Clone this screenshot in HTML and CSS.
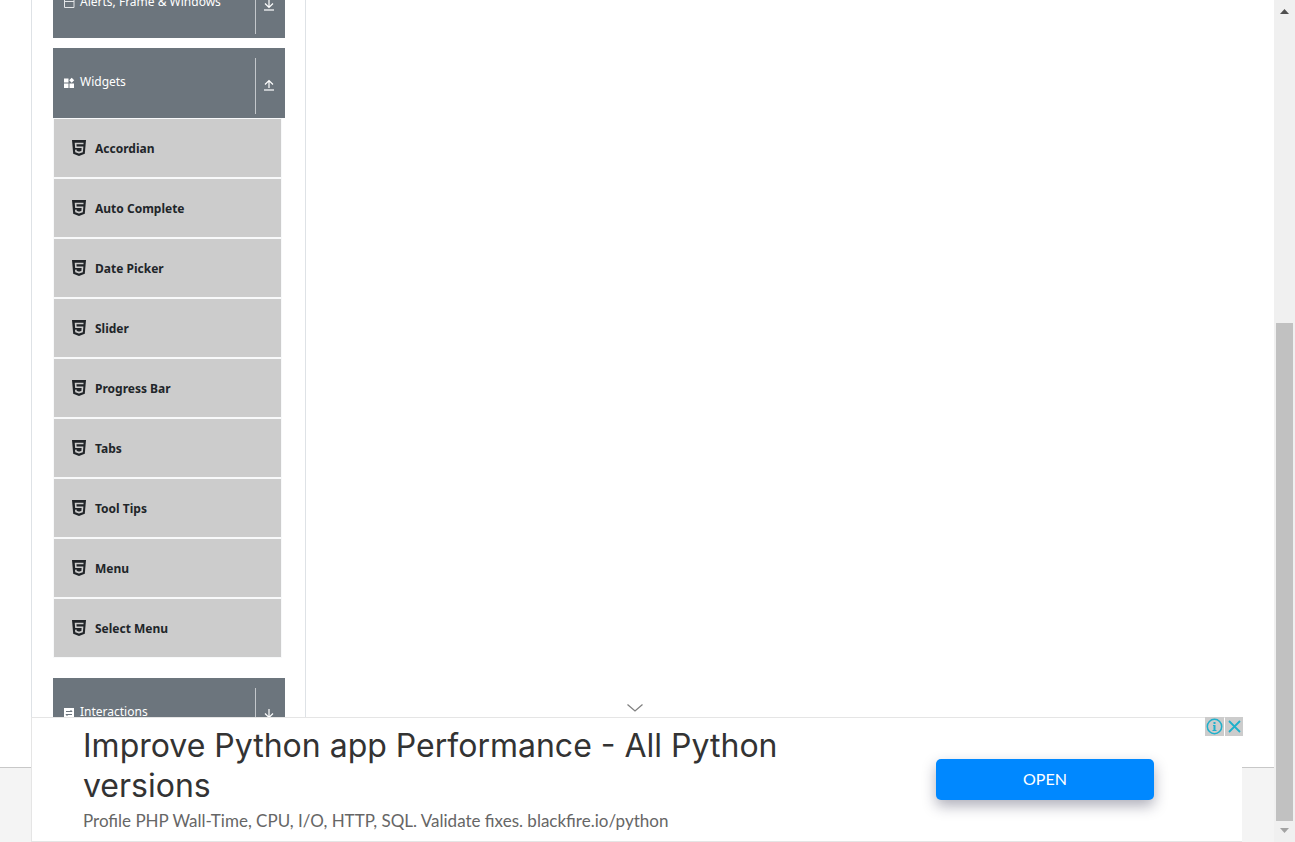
FILE: index.html
```html
<!DOCTYPE html>
<html lang="en">
<head>
<meta charset="utf-8">
<title>Widgets</title>
<link rel="stylesheet" href="styles.css">
</head>
<body>
<svg class="defs" aria-hidden="true">
  <symbol id="html5" viewBox="0 0 14 16">
    <path fill="#212529" d="M0 0h14l-1.200 13.800L7 16l-5.800-2.200z"/>
    <path fill="none" stroke="#ccc" stroke-width="1.600" d="M11.500 3.500H3.600l.3 3.700h6.600l-.4 4.400L7 12.600l-3-1-.2-1.900"/>
  </symbol>
  <symbol id="down" viewBox="0 0 10 12">
    <path fill="none" stroke="#fff" stroke-width="1.200" d="M5 0v8M1 4.500l4 4 4-4"/>
    <path fill="none" stroke="#c3c7cb" stroke-width="2" d="M0 11h10"/>
  </symbol>
  <symbol id="up" viewBox="0 0 10 12">
    <path fill="none" stroke="#fff" stroke-width="1.200" d="M5 9V1.500M1 5.500l4-4 4 4"/>
    <path fill="none" stroke="#c3c7cb" stroke-width="2" d="M0 11h10"/>
  </symbol>
</svg>
<div class="window">
  <div class="page">
    <main class="main">
      <nav class="sidebar">
        <button class="group" type="button">
          <svg class="group-icon" viewBox="0 0 12 12"><path fill="none" stroke="#e4e6e8" d="M1.500 1.500h9.500v9H1.500zM1 4.500h10"/></svg>
          <span class="group-name">Alerts, Frame &amp; Windows</span>
          <span class="toggle"><svg class="arrow"><use href="#down"/></svg></span>
        </button>
        <div class="open-group">
          <button class="group" type="button" aria-expanded="true">
            <svg class="group-icon" viewBox="0 0 12 12"><path fill="#fff" d="M1 1.500h4.500v4H1zM1 6.500h4.500V11H1zM6.500 6.500H11V11H6.500zM8.700.8l2.500 2.500-2.500 2.500-2.500-2.500z"/></svg>
            <span class="group-name">Widgets</span>
            <span class="toggle"><svg class="arrow"><use href="#up"/></svg></span>
          </button>
          <ul class="items">
            <li><a class="item" href="#"><svg class="item-icon"><use href="#html5"/></svg>Accordian</a></li>
            <li><a class="item" href="#"><svg class="item-icon"><use href="#html5"/></svg>Auto Complete</a></li>
            <li><a class="item" href="#"><svg class="item-icon"><use href="#html5"/></svg>Date Picker</a></li>
            <li><a class="item" href="#"><svg class="item-icon"><use href="#html5"/></svg>Slider</a></li>
            <li><a class="item" href="#"><svg class="item-icon"><use href="#html5"/></svg>Progress Bar</a></li>
            <li><a class="item" href="#"><svg class="item-icon"><use href="#html5"/></svg>Tabs</a></li>
            <li><a class="item" href="#"><svg class="item-icon"><use href="#html5"/></svg>Tool Tips</a></li>
            <li><a class="item" href="#"><svg class="item-icon"><use href="#html5"/></svg>Menu</a></li>
            <li><a class="item" href="#"><svg class="item-icon"><use href="#html5"/></svg>Select Menu</a></li>
          </ul>
        </div>
        <button class="group" type="button">
          <svg class="group-icon" viewBox="0 0 12 12"><path fill="#fff" d="M1 1h10v10H1z"/><path fill="none" stroke="#6c757d" d="M3 4.500h6L7.500 3M9 7.500H3L4.500 9"/></svg>
          <span class="group-name">Interactions</span>
          <span class="toggle"><svg class="arrow"><use href="#down"/></svg></span>
        </button>
      </nav>
    </main>
    <footer class="footer"></footer>
    <aside class="ad">
      <button class="collapse" type="button" aria-label="Collapse"><svg width="16" height="8" viewBox="0 0 16 8"><path fill="none" stroke="#808080" stroke-width="1.300" d="M.5.500 8 7 15.500.500"/></svg></button>
      <div class="ad-copy">
        <h2 class="ad-title">Improve Python app Performance - All Python versions</h2>
        <p class="ad-text">Profile PHP Wall-Time, CPU, I/O, HTTP, SQL. Validate fixes. blackfire.io/python</p>
      </div>
      <a class="open" href="#">OPEN</a>
      <div class="ad-tools">
        <button class="tool" type="button" aria-label="Ad information"><svg width="19" height="19" viewBox="0 0 19 19"><g fill="none" stroke="#1fb0cb"><circle cx="9.500" cy="9.500" r="7.200" stroke-width="1.500"/><path stroke-width="2" d="M9.500 8v6M9.500 5v2"/><path d="M8 8.500h1.500M7.500 13.500h4"/></g></svg></button>
        <button class="tool" type="button" aria-label="Close ad"><svg width="18" height="19" viewBox="0 0 18 19"><path fill="none" stroke="#1fb0cb" stroke-width="1.800" d="m4 4 11 11M15 4 4 15"/></svg></button>
      </div>
    </aside>
  </div>
  <div class="scrollbar">
    <svg width="9" height="5" viewBox="0 0 9 5"><path fill="#505050" d="M0 5h9L4.500 0z"/></svg>
    <div class="track"><div class="thumb"></div></div>
    <svg width="9" height="5" viewBox="0 0 9 5"><path fill="#a3a3a3" d="M0 0h9L4.500 5z"/></svg>
  </div>
</div>
</body>
</html>
```
FILE: styles.css
```css
* { box-sizing: border-box; }
body { margin: 0; font-family: "Noto Sans", sans-serif; background: #fff; }
button { border: 0; padding: 0; font: inherit; background: none; }
svg { display: block; flex: none; }
.defs { display: none; }
.window { display: flex; height: 100vh; overflow: hidden; }
.page { position: relative; display: flex; flex: 1; flex-direction: column; min-width: 0; overflow: hidden; }
.main { flex: 1; min-height: 0; padding-left: 31px; }
.footer { flex: none; height: 75px; border-top: 1px solid #c8c8c8; background: #f4f4f4; }

/* The navigation is scrolled part of the way down. */
.sidebar { width: 275px; margin-top: -32px; padding: 0 20px 0 21px; border: solid #dee2e6; border-width: 0 1px; }
.group { display: flex; width: 100%; height: 70px; padding: 10px 0 4px 10px; background: #6c757d; color: #fff; font-size: 12px; text-align: left; }
.group-icon { width: 12px; height: 12px; margin-top: 19px; }
.group-name { flex: 1; margin: 14px 0 0 5px; line-height: 20px; white-space: nowrap; }
.toggle { width: 30px; height: 56px; padding: 21px 0 0 8px; border-left: 1px solid #c3c7cb; }
.arrow { width: 10px; height: 12px; }
.open-group { margin: 10px 0 20px; }
.items { margin: 0 3px 0 0; padding: 0; list-style: none; }
.item { display: flex; align-items: center; gap: 9px; height: 60px; padding-left: 18px; border: 1px solid #f8f9fa; background: #ccc; color: #212529; font-size: 12px; font-weight: 700; text-decoration: none; }
.item-icon { width: 14px; height: 16px; }

.ad { position: absolute; right: 32px; bottom: 0; left: 31px; display: flex; height: 125px; border: 1px solid #e5e5e5; border-right: 0; background: #fff; font-family: Lato, sans-serif; }
.ad-copy { flex: 1; max-width: 760px; padding: 8px 0 0 51px; }
.ad-title { margin: 0; color: #333; font-family: Inter, sans-serif; font-size: 32px; font-weight: 400; line-height: 40px; }
.ad-text { margin: 5px 0 0; color: #666; font-size: 17px; line-height: 20px; }
.open { width: 218px; height: 41px; margin: 41px 88px 0 auto; border-radius: 5px; background: #08f; box-shadow: 0 6px 14px rgba(30, 30, 60, .35); color: #fff; font-size: 16px; line-height: 40px; text-align: center; text-decoration: none; }
.collapse { position: absolute; top: -14px; left: 595px; }
.ad-tools { position: absolute; top: -1px; right: -1px; display: flex; gap: 1px; }
.tool { background: #ccc; }
.scrollbar { display: flex; flex: none; flex-direction: column; align-items: center; width: 21px; padding: 9px 0; background: #f0f0f0; }
.track { flex: 1; align-self: stretch; padding: 309px 2px 7px; }
.thumb { height: 100%; background: #c1c1c1; }
```
